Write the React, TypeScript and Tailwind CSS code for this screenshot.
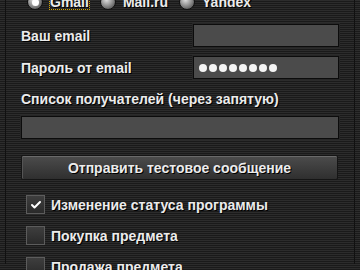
import { Check } from 'lucide-react'

const stripes =
  'bg-[repeating-linear-gradient(to_bottom,#2c2c2c_0px,#2c2c2c_1px,#1a1a1a_1px,#1a1a1a_2px)]'

const label = 'text-[14px] font-bold text-[#ececec] [text-shadow:1px_1px_0_#000] leading-none'

function Radio({ text, checked, focused }: { text: string; checked?: boolean; focused?: boolean }) {
  return (
    <div className="flex items-center gap-[7px]">
      <span className="w-[16px] h-[16px] rounded-full border border-[#111] bg-[radial-gradient(circle_at_40%_35%,#e0e0e0,#6a6a6a_70%,#3a3a3a)] flex items-center justify-center">
        {checked && <span className="w-[7px] h-[7px] rounded-full bg-white" />}
      </span>
      <span className={`${label} ${focused ? 'outline outline-1 outline-dotted outline-[#d4a500]' : ''}`}>
        {text}
      </span>
    </div>
  )
}

function Box({ text, checked }: { text: string; checked?: boolean }) {
  return (
    <div className="flex items-center gap-[6px] h-[19px]">
      <span className="w-[19px] h-[19px] border border-[#5c5c5c] bg-[linear-gradient(to_bottom,#3e3e3e,#2a2a2a)] flex items-center justify-center">
        {checked && <Check className="w-[12px] h-[12px] text-white" strokeWidth={4} />}
      </span>
      <span className={label}>{text}</span>
    </div>
  )
}

const field = 'h-[23px] bg-[#4b4b4b] border border-[#0c0c0c] shadow-[0_0_0_1px_#262626]'

export default function App() {
  return (
    <div className={`w-[360px] h-[270px] overflow-hidden ${stripes} font-['Liberation_Sans',Arial,sans-serif]`}>
      <div className="mx-[5px] h-full border-x border-[#101010] pl-[15px] pr-[15px]">
        {/* radio row, scrolled half out of view */}
        <div className="flex gap-[11px] pl-[6px] -mt-[6px] h-[16px]">
          <Radio text="Gmail" checked focused />
          <Radio text="Mail.ru" />
          <Radio text="Yandex" />
        </div>

        <div className="flex items-center justify-between mt-[14px]">
          <span className={label}>Ваш email</span>
          <div className={`${field} w-[146px]`} />
        </div>

        <div className="flex items-center justify-between mt-[9px]">
          <span className={label}>Пароль от email</span>
          <div className={`${field} w-[146px] flex items-center gap-[2px] pl-[5px]`}>
            {Array.from({ length: 8 }).map((_, i) => (
              <span key={i} className="w-[8px] h-[8px] rounded-full bg-[#f4f4f4]" />
            ))}
          </div>
        </div>

        <div className={`${label} mt-[13px]`}>Список получателей (через запятую)</div>
        <div className={`${field} mt-[10px]`} />

        <button className="mt-[16px] w-[317px] h-[25px] rounded-[2px] border border-[#151515] shadow-[inset_0_1px_0_#6a6a6a,inset_1px_0_0_#555] bg-[linear-gradient(to_bottom,#4c4c4c,#2f2f2f)] flex items-center justify-center">
          <span className={label}>Отправить тестовое сообщение</span>
        </button>

        <div className="mt-[15px] pl-[5px] flex flex-col gap-[12px]">
          <Box text="Изменение статуса программы" checked />
          <Box text="Покупка предмета" />
          <Box text="Продажа предмета" />
        </div>
      </div>
    </div>
  )
}
